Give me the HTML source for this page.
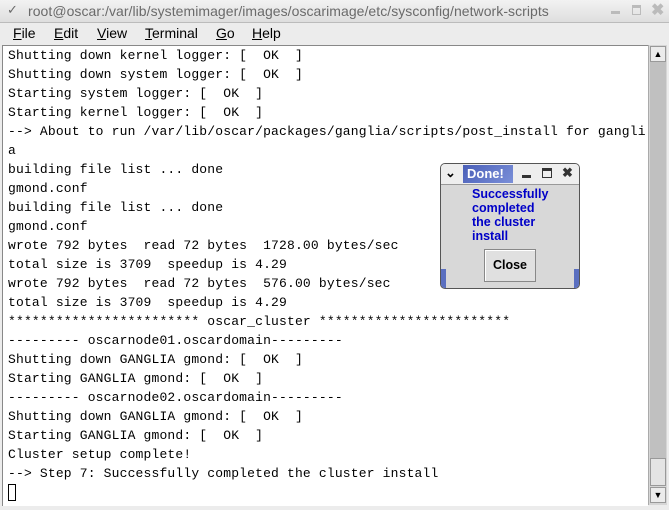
<!DOCTYPE html><html><head><style>
body{margin:0;width:669px;height:510px;background:#ececec;position:relative;overflow:hidden;font-family:"Liberation Sans",sans-serif}
.tb{position:absolute;left:0;top:0;width:669px;height:22px;background:linear-gradient(#f2f2f2,#dedede);border-bottom:1px solid #bbb;color:#6a6a6a;font-size:14px}
.menu{position:absolute;top:24px;left:0;height:20px;font-size:14px;color:#000}
.menu span{position:absolute;top:1px}
.term{position:absolute;left:2px;top:45px;width:645px;height:460px;background:#fff;border-top:1px solid #888;border-left:1px solid #888}
pre{margin:0;position:absolute;left:5px;top:0px;font-family:"Liberation Mono",monospace;font-size:13px;line-height:19px;letter-spacing:0.17px;color:#000}
.sb{position:absolute;left:648px;top:45px;width:18px;height:460px;background:#d6d6d6;border-left:1px solid #aaa}
.btn{position:absolute;left:1px;width:16px;height:16px;background:#ececec;border:1px solid #999;box-sizing:border-box;font-size:9px;text-align:center;line-height:15px}
.dlg{position:absolute;left:440px;top:163px;width:140px;height:126px;background:#d8d8d8;border:1px solid #555;border-radius:5px;box-sizing:border-box;overflow:hidden}
</style></head><body>
<div class="tb"><span style="position:absolute;left:7px;top:2px;font-size:13px">&#10003;</span><span style="position:absolute;left:28px;top:3px;letter-spacing:0.05px">root@oscar:/var/lib/systemimager/images/oscarimage/etc/sysconfig/network-scripts</span>
<span style="position:absolute;left:611px;top:11px;width:9px;height:3px;background:#bbb"></span><span style="position:absolute;left:632px;top:5px;width:9px;height:10px;border:1px solid #bbb;border-top-width:3px;box-sizing:border-box"></span><span style="position:absolute;left:651px;top:0px;font-size:16px;color:#bbb;font-weight:bold">&#10006;</span></div>
<div class="menu"><span style="left:13px"><u>F</u>ile</span><span style="left:54px"><u>E</u>dit</span><span style="left:97px"><u>V</u>iew</span><span style="left:145px"><u>T</u>erminal</span><span style="left:216px"><u>G</u>o</span><span style="left:252px"><u>H</u>elp</span></div>
<div class="term"><pre>Shutting down kernel logger: [  OK  ]
Shutting down system logger: [  OK  ]
Starting system logger: [  OK  ]
Starting kernel logger: [  OK  ]
--> About to run /var/lib/oscar/packages/ganglia/scripts/post_install for gangli
a
building file list ... done
gmond.conf
building file list ... done
gmond.conf
wrote 792 bytes  read 72 bytes  1728.00 bytes/sec
total size is 3709  speedup is 4.29
wrote 792 bytes  read 72 bytes  576.00 bytes/sec
total size is 3709  speedup is 4.29
************************ oscar_cluster ************************
--------- oscarnode01.oscardomain---------
Shutting down GANGLIA gmond: [  OK  ]
Starting GANGLIA gmond: [  OK  ]
--------- oscarnode02.oscardomain---------
Shutting down GANGLIA gmond: [  OK  ]
Starting GANGLIA gmond: [  OK  ]
Cluster setup complete!
--> Step 7: Successfully completed the cluster install
</pre><div style="position:absolute;left:5px;top:438px;width:8px;height:17px;border:1px solid #000;box-sizing:border-box"></div></div>
<div class="sb"><div class="btn" style="top:1px">&#9650;</div>
<div style="position:absolute;left:1px;top:17px;width:16px;height:396px;background:#c0c0c0"></div>
<div style="position:absolute;left:1px;top:413px;width:16px;height:28px;background:#e4e4e4;border:1px solid #999;box-sizing:border-box"></div>
<div class="btn" style="top:442px">&#9660;</div></div>
<div class="dlg">
<div style="position:absolute;left:0;top:0;width:140px;height:20px;background:#eee;border-bottom:1px solid #999"></div>
<span style="position:absolute;left:4px;top:1px;font-size:13px;font-weight:bold">&#8964;</span>
<div style="position:absolute;left:22px;top:1px;width:50px;height:18px;background:linear-gradient(135deg,#4a5fb8,#7a8fd8);color:#fff;font-weight:bold;font-size:13px;line-height:18px;padding-left:4px;box-sizing:border-box">Done!</div>
<div style="position:absolute;left:81px;top:11px;width:9px;height:3px;background:#333"></div>
<div style="position:absolute;left:101px;top:4px;width:10px;height:10px;border:1px solid #333;border-top-width:3px;box-sizing:border-box"></div>
<span style="position:absolute;left:121px;top:1px;font-size:13px;font-weight:bold;color:#333">&#10006;</span>
<div style="position:absolute;left:31px;top:23px;color:#0000c8;font-weight:bold;font-size:12.5px;line-height:14px">Successfully<br>completed<br>the cluster<br>install</div>
<div style="position:absolute;left:43px;top:85px;width:52px;height:33px;background:#e0e0e0;border:1px solid #888;box-shadow:inset 1px 1px #fff;box-sizing:border-box;text-align:center;line-height:31px;font-size:12.5px;font-weight:bold">Close</div>
<div style="position:absolute;left:0;top:105px;width:5px;height:20px;background:#5a6fc0"></div>
<div style="position:absolute;right:0;top:105px;width:5px;height:20px;background:#5a6fc0"></div>
</div>
</body></html>
